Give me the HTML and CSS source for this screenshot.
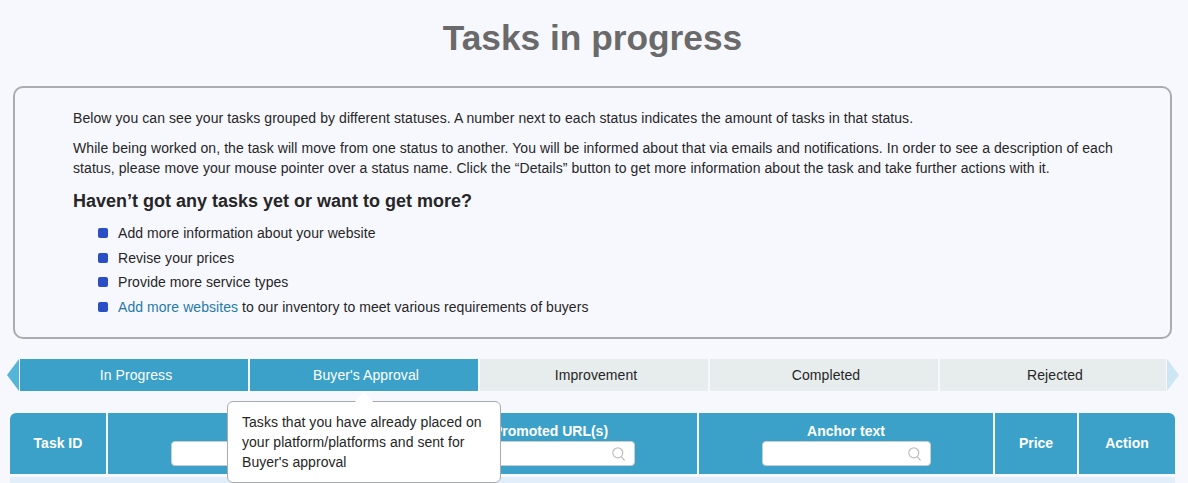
FILE: index.html
```html
<!DOCTYPE html>
<html lang="en">
<head>
<meta charset="utf-8">
<title>Tasks in progress</title>
<link rel="stylesheet" href="styles.css">
</head>
<body>
<main class="page">
  <h1 class="title">Tasks in progress</h1>
  <section class="info">
    <p class="info-p">Below you can see your tasks grouped by different statuses. A number next to each status indicates the amount of tasks in that status.</p>
    <p class="info-p">While being worked on, the task will move from one status to another. You will be informed about that via emails and notifications. In order to see a description of each status, please move your mouse pointer over a status name. Click the “Details” button to get more information about the task and take further actions with it.</p>
    <h2 class="info-h">Haven’t got any tasks yet or want to get more?</h2>
    <ul class="info-list">
      <li class="info-item">Add more information about your website</li>
      <li class="info-item">Revise your prices</li>
      <li class="info-item">Provide more service types</li>
      <li class="info-item"><span><a class="link" href="#">Add more websites</a> to our inventory to meet various requirements of buyers</span></li>
    </ul>
  </section>
  <nav class="tabs">
    <span class="arrow arrow-left"></span>
    <a class="tab tab-on" href="#">In Progress</a>
    <a class="tab tab-on" href="#">Buyer's Approval</a>
    <a class="tab" href="#">Improvement</a>
    <a class="tab" href="#">Completed</a>
    <a class="tab" href="#">Rejected</a>
    <span class="arrow arrow-right"></span>
  </nav>
  <div class="table">
    <div class="cell cell-first">Task ID</div>
    <div class="cell cell-stack">
      <span class="cell-label">Website</span>
      <span class="search"><svg class="search-icon" viewBox="0 0 14 14"><circle cx="5.8" cy="5.8" r="5"/><path d="M9.2 9.6l3.4 3.9"/></svg></span>
    </div>
    <div class="cell cell-stack">
      <span class="cell-label">Promoted URL(s)</span>
      <span class="search"><svg class="search-icon" viewBox="0 0 14 14"><circle cx="5.8" cy="5.8" r="5"/><path d="M9.2 9.6l3.4 3.9"/></svg></span>
    </div>
    <div class="cell cell-stack">
      <span class="cell-label">Anchor text</span>
      <span class="search"><svg class="search-icon" viewBox="0 0 14 14"><circle cx="5.8" cy="5.8" r="5"/><path d="M9.2 9.6l3.4 3.9"/></svg></span>
    </div>
    <div class="cell cell-plain">Price</div>
    <div class="cell cell-plain cell-last">Action</div>
    <div class="row-next"></div>
  </div>
  <div class="tooltip">Tasks that you have already placed on your platform/platforms and sent for Buyer's approval</div>
</main>
</body>
</html>
```
FILE: styles.css
```css
html, body {
  margin: 0;
  height: 483px;
  overflow: hidden;
  background: #f7f8fe;
}
body {
  font-family: "Liberation Sans", Arial, sans-serif;
  color: #262626;
}
.page {
  position: relative;
  height: 483px;
  overflow: hidden;
  padding: 0 13px 0 10px;
  box-sizing: border-box;
  display: flex;
  flex-direction: column;
}
.page > * { flex: none; }
.title {
  margin: 16px 0 0;
  height: 70px;
  text-align: center;
  font-size: 35.3px;
  line-height: 44px;
  font-weight: 700;
  color: #6a6a6a;
}
.info {
  margin-left: 3px;
  width: 1159px;
  height: 253px;
  box-sizing: border-box;
  border: 2px solid #aaacb2;
  border-radius: 10px;
  padding: 20px 50px 0 58px;
  font-size: 14px;
  line-height: 20px;
  letter-spacing: 0.075px;
}
.info-p { margin: 0 0 10px; }
.info-h {
  margin: 12px 0 11px;
  font-size: 18px;
  line-height: 22px;
  font-weight: 700;
  letter-spacing: 0;
}
.info-list {
  list-style: none;
  margin: 0;
  padding: 0 0 0 25px;
  display: flex;
  flex-direction: column;
  gap: 4.67px;
  letter-spacing: 0.06px;
}
.info-item {
  display: flex;
  align-items: center;
  gap: 10px;
}
.info-item::before {
  content: "";
  width: 10px;
  height: 10px;
  border-radius: 2px;
  background: #2a4fc4;
  flex: none;
}
.link { color: #1f7aa8; text-decoration: none; }
.tabs {
  margin: 20px 0 0 -3px;
  height: 32px;
  display: grid;
  grid-template-columns: 11px repeat(4, 228px) 226px 12px;
  column-gap: 2px;
  width: 1173px;
  font-size: 14px;
  letter-spacing: 0.085px;
}
.arrow {
  width: 12px;
  height: 32px;
  background: #54b5d8;
}
.arrow-left { clip-path: polygon(100% 0, 100% 100%, 0 50%); }
.arrow-right { background: #cde6f3; clip-path: polygon(0 0, 100% 50%, 0 100%); margin-left: -1px; }
.tab {
  display: flex;
  align-items: center;
  justify-content: center;
  padding-left: 4px;
  background: #e7eced;
  color: #262626;
  text-decoration: none;
}
.tab-on { background: #3ba1c9; color: #fff; }
.table {
  margin-top: 22px;
  width: 1165px;
  display: grid;
  grid-template-columns: 96px 294px 293px 294px 82px 96px;
  column-gap: 2px;
  grid-template-rows: 61px 20px;
  row-gap: 3px;
  font-size: 14px;
  font-weight: 700;
  color: #fff;
}
.cell {
  background: #3ba1c9;
  display: flex;
  align-items: center;
  justify-content: center;
  box-sizing: border-box;
}
.cell-first, .cell-plain { padding-bottom: 2px; }
.cell-first { border-top-left-radius: 6px; }
.cell-last { border-top-right-radius: 6px; }
.cell-stack {
  flex-direction: column;
  justify-content: flex-start;
  padding-top: 10px;
}
.cell-label { line-height: 16px; height: 18px; }
.search {
  width: 169px;
  height: 25px;
  box-sizing: border-box;
  background: #fff;
  border: 1px solid #c9ccd0;
  border-radius: 4px;
  display: flex;
  align-items: center;
  justify-content: flex-end;
  padding-right: 8px;
}
.search-icon {
  width: 14px;
  height: 14px;
  fill: none;
  stroke: #bfbfbf;
  stroke-width: 1.2;
}
.row-next {
  grid-column: 1 / -1;
  background: #e3eefb;
}
.tooltip {
  position: absolute;
  left: 227px;
  top: 401px;
  width: 274px;
  height: 82px;
  box-sizing: border-box;
  padding: 10px 14px;
  background: #fff;
  border: 1px solid #a9abb3;
  border-radius: 6px;
  font-size: 14px;
  line-height: 20px;
  letter-spacing: 0.04px;
  color: #262626;
}
.tooltip::before {
  content: "";
  position: absolute;
  left: 127px;
  top: -10px;
  width: 18px;
  height: 10px;
  background: #fff;
  clip-path: polygon(50% 0, 100% 100%, 0 100%);
}
```
